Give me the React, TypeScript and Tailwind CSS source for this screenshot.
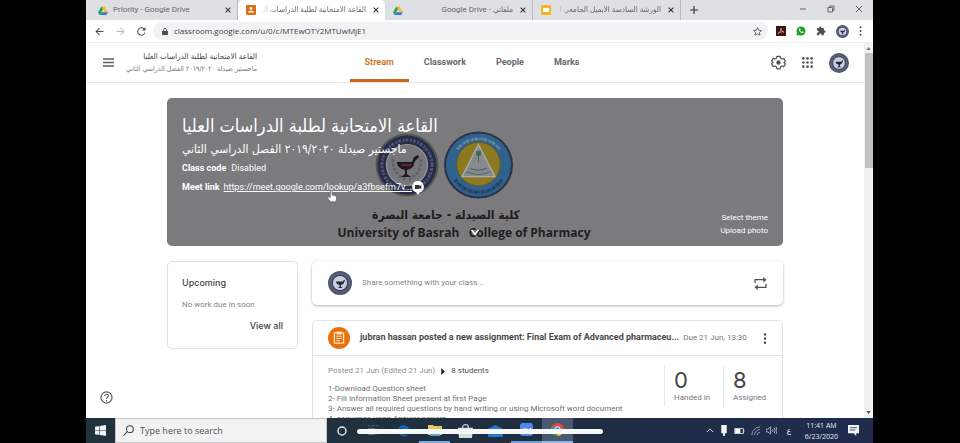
import React from "react";

const latin = "font-[Roboto,'DejaVu_Sans',sans-serif]";
const arabic = "font-['DejaVu_Sans_Condensed','DejaVu_Sans',sans-serif]";

function PharmacySeal({ className }: { className: string }) {
  return (
    <svg viewBox="0 0 64 64" className={className} aria-hidden="true">
      <circle cx="32" cy="32" r="31.5" fill="#565550" />
      <circle cx="32" cy="32" r="29.5" fill="#272c4a" />
      <circle cx="32" cy="32" r="25" fill="none" stroke="#4d536e" strokeWidth="3" strokeDasharray="2 1 3 1.5" />
      <circle cx="32" cy="32" r="20.5" fill="#77777b" stroke="#96979c" strokeWidth="1.2" />
      <path d="M18 26c-1 9 4 17 12 20M46 26c1 9-4 17-12 20" fill="none" stroke="#5e6067" strokeWidth="2.5" strokeDasharray="3 1.5" />
      <path d="M22 29h15l2-5 4-2 1 2-3 3-2 3c0 4-3 6-7 7v4l4 3H26l4-3v-4c-5-1-8-4-8-8z" fill="#20191d" />
      <path d="M26 32h10" stroke="#58282d" strokeWidth="2" />
    </svg>
  );
}

function Avatar({ className }: { className: string }) {
  return (
    <svg viewBox="0 0 24 24" className={className} aria-hidden="true">
      <circle cx="12" cy="12" r="12" fill="#4d556c" />
      <circle cx="12" cy="12" r="9.5" fill="none" stroke="#6b738d" strokeWidth="1.3" strokeDasharray="1 1" />
      <circle cx="12" cy="12" r="7.6" fill="#c9d0dc" stroke="#343d5a" />
      <path d="M8 10.5h7l1-2 1 1-1 2c-.5 1.500-1.500 2-3 2.500v2l2 1H9.500l2-1v-2c-2-.5-3.500-1.500-3.500-3.500z" fill="#23283c" />
    </svg>
  );
}

function UniversitySeal({ className }: { className: string }) {
  return (
    <svg viewBox="0 0 72 70" className={className} aria-hidden="true">
      <ellipse cx="36" cy="35" rx="35.5" ry="34.5" fill="#2b3349" />
      <ellipse cx="36" cy="35" rx="33.5" ry="32.5" fill="#2f628c" />
      <path d="M14 19a27 26 0 0 1 44 0" fill="none" stroke="#66869e" strokeWidth="3" strokeDasharray="2 .7 4 1 1 .5" />
      <path d="M12 50a28 27 0 0 0 48 0" fill="none" stroke="#253f62" strokeWidth="3.5" strokeDasharray="3 1 1.5 .7" />
      <circle cx="36" cy="34" r="22.5" fill="#8d7a20" stroke="#5a5931" />
      <path d="M36 14 19 47h34z" fill="#858a8d" stroke="#a9adae" strokeWidth="1.3" />
      <path d="M36 23v9M34 21h4v4h-4z" stroke="#46665f" fill="#46665f" />
      <path d="M24 42c8 4 16 4 24 0M27 38c6 3 12 3 18 0" fill="none" stroke="#53676f" strokeWidth="1.2" />
    </svg>
  );
}

function DriveIcon() {
  return (
    <svg viewBox="0 0 24 22" className="h-[9px] w-[10px] shrink-0" aria-hidden="true">
      <path d="M8 1h8l8 14h-8z" fill="#f6c026" />
      <path d="M8 1 0 15l4 7 8-14z" fill="#1ea362" />
      <path d="M8 15h16l-4 7H4z" fill="#3a78d8" />
    </svg>
  );
}

function ClassroomIcon() {
  return (
    <svg viewBox="0 0 20 20" className="size-[10px] shrink-0" aria-hidden="true">
      <rect width="20" height="20" rx="2" fill="#dd6d13" />
      <circle cx="10" cy="7" r="2.8" fill="#fff" />
      <path d="M4 15c0-5 12-5 12 0z" fill="#fff" />
    </svg>
  );
}

function SlidesIcon() {
  return (
    <svg viewBox="0 0 20 20" className="size-[10px] shrink-0" aria-hidden="true">
      <rect width="20" height="20" rx="3" fill="#f2b51c" />
      <rect x="4" y="6" width="12" height="8" fill="#fff" />
    </svg>
  );
}

function Cross({ className }: { className: string }) {
  return (
    <svg viewBox="0 0 10 10" className={className} aria-hidden="true">
      <path d="m1 1 8 8M9 1 1 9" stroke="currentColor" strokeWidth="1.8" />
    </svg>
  );
}

type TabProps = { icon: React.ReactNode; title: string; rtl?: boolean; active?: boolean; fade?: boolean };

function BrowserTab({ icon, title, rtl, active, fade }: TabProps) {
  return (
    <div
      className={`flex min-w-0 flex-1 items-center gap-[5px] pr-[4px] pl-[8px] ${
        active ? "rounded-t-[5px] bg-white" : "border-r border-[#b9babe]"
      }`}
    >
      {icon}
      <span
        dir={rtl ? "rtl" : "ltr"}
        className={`min-w-0 flex-1 overflow-hidden text-[8px] leading-[12px] whitespace-nowrap text-[#65666a] ${
          fade ? "[mask-image:linear-gradient(to_right,transparent,black_16px)]" : ""
        } font-[Roboto,'DejaVu_Sans_Condensed','DejaVu_Sans',sans-serif]`}
      >
        {title}
      </span>
      <button aria-label="Close tab" className="flex size-[10px] items-center justify-center text-[#333]">
        <Cross className="size-[6px]" />
      </button>
    </div>
  );
}

function BrowserChrome() {
  return (
    <header className="shrink-0">
      <div className="flex h-[20px] bg-[#dfe0e4]">
        <div className="flex min-w-0 grow-0 basis-[595px] pl-[4px]">
          <BrowserTab icon={<DriveIcon />} title="Priority - Google Drive" />
          <BrowserTab icon={<ClassroomIcon />} title="القاعة الامتحانية لطلبة الدراسات الـ" rtl active fade />
          <BrowserTab icon={<DriveIcon />} title="ملفاتي - Google Drive" rtl />
          <BrowserTab icon={<SlidesIcon />} title="الورشة السادسة الايميل الجامعي ا-" rtl fade />
        </div>
        <button aria-label="New tab" className="flex w-[25px] items-center justify-center text-[#333]">
          <svg viewBox="0 0 10 10" className="size-[8px]"><path d="M5 0v10M0 5h10" stroke="currentColor" strokeWidth="1.5" /></svg>
        </button>
        <div className="ml-auto flex items-center gap-[20px] pr-[10px] pb-[3px] text-[#66676b]">
          <button aria-label="Minimise"><svg viewBox="0 0 8 8" className="size-[8px]"><path d="M1 4h6" stroke="currentColor" /></svg></button>
          <button aria-label="Restore"><svg viewBox="0 0 8 8" className="size-[8px]"><path d="M1 2.500h4.500V7H1zM2.500 2V1H7v4.500H6" fill="none" stroke="currentColor" /></svg></button>
          <button aria-label="Close window"><svg viewBox="0 0 8 8" className="size-[8px]"><path d="m1 1 6 6M7 1 1 7" stroke="currentColor" /></svg></button>
        </div>
      </div>
      <div className="flex h-[23px] items-center border-b border-[#eeeeef] bg-white pr-[11px] pl-[9px] text-[#4c4d50]">
        <div className="flex gap-[12px]">
          <button aria-label="Back"><svg viewBox="0 0 16 16" className="size-[9px]"><path d="M15 8H2M8 2 2 8l6 6" fill="none" stroke="currentColor" strokeWidth="1.8" /></svg></button>
          <button aria-label="Forward" className="text-[#b9babd]"><svg viewBox="0 0 16 16" className="size-[9px]"><path d="M1 8h13M8 2l6 6-6 6" fill="none" stroke="currentColor" strokeWidth="1.8" /></svg></button>
          <button aria-label="Reload"><svg viewBox="0 0 16 16" className="size-[9px]"><path d="M14 10a6.500 6.500 0 1 1-1.500-6.500L14 5" fill="none" stroke="currentColor" strokeWidth="1.8" /><path d="M15 0v6H9z" fill="currentColor" /></svg></button>
        </div>
        <div className="ml-[7px] flex h-[18px] min-w-0 flex-1 items-center gap-[6px] rounded-full bg-[#f1f2f4] pr-[6px] pl-[9px]">
          <svg viewBox="0 0 10 12" className="h-[7px] w-[6px] shrink-0"><path d="M0 5h10v7H0z" fill="currentColor" /><path d="M2.500 5V3a2.500 2.500 0 0 1 5 0v2" fill="none" stroke="currentColor" strokeWidth="1.5" /></svg>
          <input
            aria-label="Address"
            readOnly
            value="classroom.google.com/u/0/c/MTEwOTY2MTUwMjE1"
            className="min-w-0 flex-1 bg-transparent font-['Open_Sans',sans-serif] text-[8px] leading-[14px] text-[#3f4043] outline-none"
          />
          <button aria-label="Bookmark this page">
            <svg viewBox="0 0 20 20" className="size-[9px]"><path d="m10 1.500 2.600 5.700 6.200.7-4.600 4.200 1.300 6.100L10 15.100l-5.500 3.100 1.300-6.100L1.200 7.900l6.200-.7z" fill="none" stroke="currentColor" strokeWidth="1.8" /></svg>
          </button>
        </div>
        <div className="ml-[8px] flex items-center gap-[10px]">
          <button aria-label="PDF extension">
            <svg viewBox="0 0 20 20" className="size-[10px]"><path d="M0 0h20v20H0z" fill="#401313" /><path d="M4 15c4-2 6-6 6-11 0 5 3 8 6 8-4-1-9 0-12 3z" fill="none" stroke="#d9b3b0" strokeWidth="1.5" /></svg>
          </button>
          <button aria-label="Phone extension">
            <svg viewBox="0 0 20 20" className="size-[10px]"><circle cx="10" cy="10" r="9" fill="#1ba31c" /><path d="m1 19 1-6 5 5z" fill="#1ba31c" /><path d="M6 5c-1 5 4 10 9 9l-.5-3-2-.5-1.500 1.500-3-3L9.500 7 8.500 5z" fill="#fff" /></svg>
          </button>
          <button aria-label="Extensions">
            <svg viewBox="0 0 24 24" className="size-[10px]"><path d="M20.500 11H19V7a2 2 0 0 0-2-2h-4V3.500a2.500 2.500 0 0 0-5 0V5H4a2 2 0 0 0-2 2v3.800h1.500a2.700 2.700 0 0 1 0 5.400H2V20a2 2 0 0 0 2 2h3.800v-1.500a2.700 2.700 0 0 1 5.400 0V22H17a2 2 0 0 0 2-2v-4h1.500a2.500 2.500 0 0 0 0-5z" fill="currentColor" /></svg>
          </button>
          <button aria-label="Profile"><Avatar className="size-[13px]" /></button>
          <button aria-label="Browser menu">
            <svg viewBox="0 0 4 16" className="h-[10px] w-[3px]"><circle cx="2" cy="2" r="1.6" fill="currentColor" /><circle cx="2" cy="8" r="1.6" fill="currentColor" /><circle cx="2" cy="14" r="1.6" fill="currentColor" /></svg>
          </button>
        </div>
      </div>
    </header>
  );
}

function ClassHeader() {
  const tabs = ["Stream", "Classwork", "People", "Marks"];
  return (
    <div className="grid h-[40px] shrink-0 grid-cols-[1fr_auto_1fr] border-b border-[#e6e6e7]">
      <div className="flex items-center gap-[12px] pl-[17px]">
        <button aria-label="Main menu" className="text-[#5c5d60]">
          <svg viewBox="0 0 11 9" className="h-[9px] w-[11px]"><path d="M0 1h11M0 4.500h11M0 8h11" stroke="currentColor" strokeWidth="1.3" /></svg>
        </button>
        <div dir="rtl" className={`whitespace-nowrap ${arabic}`}>
          <div className="text-[8px] leading-[12px] text-[#45464a]">القاعة الامتحانية لطلبة الدراسات العليا</div>
          <div className="text-[7px] leading-[12px] text-[#77787b]">ماجستير صيدلة ٢٠١٩/٢٠٢٠ الفصل الدراسي الثاني</div>
        </div>
      </div>
      <nav className="flex pr-[6px] text-[9px] font-bold text-[#67696d]">
        {tabs.map((tab, i) => (
          <a
            key={tab}
            href="#"
            className={`flex items-center border-b-[3px] px-[15px] pt-[3px] ${
              i === 0 ? "border-[#c8671a] text-[#c8792f]" : "border-transparent"
            }`}
          >
            {tab}
          </a>
        ))}
      </nav>
      <div className="flex items-center justify-end gap-[16px] pr-[15px] text-[#55565a]">
        <button aria-label="Class settings">
          <svg viewBox="0 0 24 24" className="size-[15px]"><path d="M9.500 2h5l.8 3 2.400 1.400 3-.9L23 9.800 20.800 12l2.200 2.200-2.300 4.300-3-.9-2.400 1.400-.8 3h-5l-.8-3-2.400-1.400-3 .9L1 14.200 3.200 12 1 9.800l2.300-4.300 3 .9L8.700 5z" fill="none" stroke="currentColor" strokeWidth="2" strokeLinejoin="round" /><circle cx="12" cy="12" r="3.5" fill="currentColor" /></svg>
        </button>
        <button aria-label="Apps">
          <svg viewBox="0 0 20 20" className="size-[11px]">
            {[2.5, 10, 17.5].map((y) => [2.5, 10, 17.5].map((x) => <circle key={`${x}-${y}`} cx={x} cy={y} r="2.4" fill="currentColor" />))}
          </svg>
        </button>
        <button aria-label="Account"><Avatar className="size-[20px]" /></button>
      </div>
    </div>
  );
}

function Banner() {
  return (
    <section className="relative h-[148px] overflow-hidden rounded-[5px] bg-[#7b7a7d]">
      <div className="absolute inset-x-0 top-[33px] flex flex-col items-center text-[#1d1c20]">
        <div className="flex items-center gap-[4px] pr-[62px]">
          <PharmacySeal className="size-[64px]" />
          <UniversitySeal className="h-[68px] w-[71px]" />
        </div>
        <div dir="rtl" className={`mt-[8px] pr-[58px] text-[12px] leading-[16px] font-bold ${arabic}`}>كلية الصيدلة - جامعة البصرة</div>
        <div className="pr-[22px] font-['Open_Sans',sans-serif] text-[12px] leading-[19px] font-bold whitespace-pre text-[#1f1e21]">University of Basrah   College of Pharmacy</div>
      </div>
      <svg viewBox="0 0 10 8" className="absolute bottom-[10px] left-1/2 h-[7px] w-[9px] -translate-x-1/2"><path d="m1 1 4 5 4-5" fill="none" stroke="#fff" strokeWidth="1.8" /></svg>

      <div className="relative flex flex-col items-start pt-[14px] pl-[15px] text-white">
        <h1 dir="rtl" className={`text-[18px] leading-[27px] ${arabic}`}>القاعة الامتحانية لطلبة الدراسات العليا</h1>
        <p dir="rtl" className={`text-[12px] leading-[20px] ${arabic}`}>ماجستير صيدلة ٢٠١٩/٢٠٢٠ الفصل الدراسي الثاني</p>
        <p className="flex gap-[5px] text-[9px] leading-[19px]">
          <span className="font-bold">Class code</span>
          <span>Disabled</span>
        </p>
        <p className="flex items-center gap-[4px] text-[9px] leading-[19px]">
          <span className="font-bold">Meet link</span>
          <a href="#" className="underline">https://meet.google.com/lookup/a3fbsefm7v...</a>
          <svg viewBox="0 0 12 14" className="-ml-[4px] h-[14px] w-[12px]"><path d="M6 0a6 5.800 0 0 1 2 11.200L6 14l-2-2.800A6 5.800 0 0 1 6 0z" fill="#fff" /><path d="M3 4h4.500v1.200L9.300 4v4L7.500 6.800V8H3z" fill="#333" /></svg>
        </p>
      </div>
      <svg viewBox="0 0 12 16" className="absolute top-[92px] left-[160px] h-[13px] w-[10px]"><path d="M4 1c1-1 2 0 2 1v4l5 1.500c1 1 .5 4-.5 7H4L1 10c-1-2 1-2 3-.5z" fill="#fff" stroke="#555" strokeWidth=".7" /></svg>
      <div className="absolute right-[15px] bottom-[9px] flex flex-col items-end text-[8px] leading-[13px] text-white">
        <button>Select theme</button>
        <button>Upload photo</button>
      </div>
    </section>
  );
}

const card = "rounded-[5px] border border-[#e2e2e3] bg-white";

function Upcoming() {
  return (
    <aside className={`flex h-[88px] w-[131px] shrink-0 flex-col px-[14px] pt-[14px] ${card}`}>
      <h2 className="font-[Inter,sans-serif] text-[9px] leading-[14px] font-medium text-[#3f4043]">Upcoming</h2>
      <p className="mt-[9px] text-[8px] leading-[12px] text-[#85868a]">No work due in soon</p>
      <button className="mt-[8px] self-end font-[Inter,sans-serif] text-[9px] leading-[14px] font-medium text-[#3f4043]">View all</button>
    </aside>
  );
}

function ShareBox() {
  return (
    <section className="flex h-[44px] items-center gap-[10px] rounded-[5px] bg-white px-[16px] shadow-[0_1px_3px_rgba(60,64,67,0.4)]">
      <Avatar className="size-[24px]" />
      <button className="flex-1 text-left text-[8px] text-[#85868a]">Share something with your class...</button>
      <button aria-label="Reuse post" className="text-[#4e4f52]">
        <svg viewBox="0 0 24 24" className="size-[13px]"><path d="M2 11V5h17M22 13v6H5" fill="none" stroke="currentColor" strokeWidth="2.4" /><path d="m17 0 6 5-6 5zM7 14l-6 5 6 5z" fill="currentColor" /></svg>
      </button>
    </section>
  );
}

function Post() {
  const stats = [
    { value: "0", label: "Handed in" },
    { value: "8", label: "Assigned" },
  ];
  return (
    <article className={card}>
      <div className="flex h-[35px] items-center border-b border-[#e4e4e5] pr-[15px] pl-[15px]">
        <svg viewBox="0 0 24 24" className="size-[22px] shrink-0"><circle cx="12" cy="12" r="12" fill="#e8710a" /><path d="M7 6.500h10v11H7z" fill="none" stroke="#fde3cb" strokeWidth="1.4" /><path d="M10 5.500h4v2h-4zM9 10h6M9 12.500h6M9 15h4" fill="#fde3cb" stroke="#fde3cb" strokeWidth="1.1" /></svg>
        <h3 className="ml-[10px] text-[9px] font-bold whitespace-nowrap text-[#48494c]">
          jubran hassan posted a new assignment: Final Exam of Advanced pharmaceu...
        </h3>
        <span className="ml-[4px] text-[8px] whitespace-nowrap text-[#77787b]">Due 21 Jun, 13:30</span>
        <button aria-label="Post options" className="ml-auto text-[#3f4043]">
          <svg viewBox="0 0 4 16" className="h-[11px] w-[4px]"><circle cx="2" cy="2" r="1.7" fill="currentColor" /><circle cx="2" cy="8" r="1.7" fill="currentColor" /><circle cx="2" cy="14" r="1.7" fill="currentColor" /></svg>
        </button>
      </div>
      <div className="flex justify-between pt-[10px] pl-[15px]">
        <div className="text-[8px] leading-[10px] text-[#707174]">
          <p className="flex items-center gap-[6px] whitespace-nowrap">
            <span className="text-[#8e8f92]">Posted 21 Jun (Edited 21 Jun)</span>
            <svg viewBox="0 0 4 8" className="h-[7px] w-[4px]"><path d="m0 0 4 4-4 4z" fill="#222" /></svg>
            <span className="text-[#4e4f52]">8 students</span>
          </p>
          <div className="mt-[8px] whitespace-nowrap">
            <p>1-Download Question sheet</p>
            <p>2- Fill Information Sheet present at first Page</p>
            <p>3- Answer all required questions by hand writing or using Microsoft word document</p>
            <p>4- sequence upon Answer papers</p>
          </div>
        </div>
        <dl className="flex h-[40px] shrink-0">
          {stats.map((s) => (
            <div key={s.label} className="flex w-[59px] flex-col-reverse justify-end border-l border-[#e8e8e9] pt-[2px] pl-[9px]">
              <dt className="text-[8px] leading-[12px] text-[#77787b]">{s.label}</dt>
              <dd className="font-[Inter,sans-serif] text-[22px] leading-[24px] text-[#444548]">{s.value}</dd>
            </div>
          ))}
        </dl>
      </div>
    </article>
  );
}

function TaskbarApps() {
  return (
    <div className="relative flex h-full items-center">
      <button aria-label="Cortana" className="flex w-[30px] justify-center">
        <svg viewBox="0 0 12 12" className="size-[10px]"><circle cx="6" cy="6" r="4.8" fill="none" stroke="#dfe5e8" strokeWidth="1.8" /></svg>
      </button>
      <button aria-label="Task view" className="flex w-[31px] justify-center">
        <svg viewBox="0 0 14 14" className="size-[12px]"><path d="M1 1h2M5 1h4M11 1h2M2 4h7v7H2zM12 4v7" fill="none" stroke="#5c6b75" strokeWidth="1.2" /></svg>
      </button>
      <button aria-label="Edge" className="flex w-[31px] justify-center">
        <svg viewBox="0 0 14 14" className="size-[13px]"><path d="M1 7a6 6 0 0 1 12 0v2H5c1 3 5 3 7 2-2 4-9 3-10-2 1-3 3-4 5-4-3-1-5 0-6 2z" fill="#1565b7" /></svg>
      </button>
      <button aria-label="File Explorer" className="flex h-full w-[31px] items-center justify-center border-b-2 border-[#7aafe0]">
        <svg viewBox="0 0 14 12" className="h-[12px] w-[14px]"><path d="M0 1h5l1 1h8v9H0z" fill="#eac85e" /><path d="M2 8h10v4H2z" fill="#5aa7dd" /></svg>
      </button>
      <button aria-label="Store" className="flex w-[30px] justify-center">
        <svg viewBox="0 0 16 15" className="h-[14px] w-[15px]"><path d="M5 5V3c0-3 6-3 6 0v2" fill="none" stroke="#ccd3d8" strokeWidth="1.3" /><path d="M0 4h16l-1 11H1z" fill="#d8dde0" /></svg>
      </button>
      <button aria-label="Mail" className="flex w-[31px] justify-center">
        <svg viewBox="0 0 16 13" className="h-[12px] w-[15px]"><path d="M0 4 8 0l8 4v9H0z" fill="#2177ce" /><path d="m1 5 7 5 7-5" fill="#8abef0" /></svg>
      </button>
      <button aria-label="Zoom" className="flex h-full w-[31px] items-center justify-center border-b-2 border-[#6d9fe0]">
        <svg viewBox="0 0 14 14" className="size-[13px]"><rect width="14" height="14" rx="3" fill="#4d86ec" /><path d="M3 6h5v3H3zM9 7l3-2v5L9 8z" fill="#fff" /></svg>
      </button>
      <button aria-label="Chrome" className="flex h-full w-[31px] items-center justify-center border-b-2 border-[#8fb9e8] bg-[#4b5970]">
        <svg viewBox="0 0 14 14" className="size-[13px]"><circle cx="7" cy="7" r="7" fill="#dd4b3e" /><path d="M7 7 1 3.500A7 7 0 0 0 7 14z" fill="#35a359" /><path d="M7 7h7a7 7 0 0 1-7 7z" fill="#f5c63b" /><circle cx="7" cy="7" r="3" fill="#4688f0" stroke="#fff" /></svg>
      </button>
      <div className="absolute inset-x-0 top-[11px] mr-[-30px] ml-[30px] h-[5px] rounded-full bg-[#f7f8f9]" />
    </div>
  );
}

function Taskbar() {
  return (
    <footer className="flex h-[25px] shrink-0 bg-linear-to-r from-[#20333d] via-[#1f2f40] to-[#202b4e] text-white">
      <button aria-label="Start" className="flex w-[29px] items-center justify-center">
        <svg viewBox="0 0 20 20" className="size-[11px]"><path d="M0 3l8-1v7H0zM9 2l11-2v9H9zM0 10h8v8l-8-1zM9 10h11v10L9 18z" fill="#eef3f5" /></svg>
      </button>
      <label className="flex w-[212px] items-center gap-[6px] border border-[#c4c5c7] bg-[#f2f2f3] px-[7px] text-[#414245]">
        <svg viewBox="0 0 12 12" className="size-[11px] shrink-0"><circle cx="7.5" cy="4.5" r="3.7" fill="none" stroke="currentColor" strokeWidth="1.1" /><path d="M5 7 .5 11.500" stroke="currentColor" strokeWidth="1.1" /></svg>
        <input aria-label="Search" placeholder="Type here to search" className="min-w-0 flex-1 bg-transparent font-['Open_Sans',sans-serif] text-[9px] outline-none placeholder:text-[#505154]" />
      </label>
      <TaskbarApps />
      <div className="ml-auto flex items-center pr-[14px]">
        <div className="flex items-center gap-[6px]">
          <svg viewBox="0 0 10 6" className="h-[5px] w-[8px]"><path d="m1 5 4-4 4 4" fill="none" stroke="#dde1e8" strokeWidth="1.2" /></svg>
          <svg viewBox="0 0 8 12" className="h-[11px] w-[8px]"><path d="M1 0h6v9H1zM3 9h2v3H3z" fill="#f1f3f6" /></svg>
          <svg viewBox="0 0 12 7" className="h-[6px] w-[11px]"><path d="M.5.500h10v6H.5zM11 2v3" fill="none" stroke="#eceff3" /><path d="M1 1h6v5H1z" fill="#fff" /></svg>
          <svg viewBox="0 0 10 10" className="size-[9px]"><path d="M1 10A9 9 0 0 1 10 1M4 10a6 6 0 0 1 6-6M7 10a3 3 0 0 1 3-3" fill="none" stroke="#9ba3b3" /></svg>
          <svg viewBox="0 0 12 10" className="h-[9px] w-[11px]"><path d="M0 3.500h2L5 1v8L2 6.500H0zM7 3.500q1 1.500 0 3M9 2q2 3 0 6M11 1q2 4 0 8" fill="none" stroke="#b3bac8" /></svg>
          <span className={`w-[12px] text-center text-[8px] ${arabic}`}>ع</span>
        </div>
        <div className="ml-[10px] text-center font-['Open_Sans',sans-serif] text-[7px] leading-[11px] text-[#e8ebf0]">
          <div>11:41 AM</div>
          <div>6/23/2020</div>
        </div>
        <button aria-label="Notifications" className="ml-[10px]">
          <svg viewBox="0 0 12 12" className="size-[11px]"><path d="M0 0h12v9H9v3L6 9H0z" fill="#f2f4f7" /><path d="M2 3h8M2 5.500h6" stroke="#3b4765" /></svg>
        </button>
      </div>
    </footer>
  );
}

export default function App() {
  return (
    <div className={`h-screen bg-black pr-[87px] pl-[86px] ${latin}`}>
      <div className="flex h-full flex-col overflow-hidden bg-white">
        <BrowserChrome />
        <div className="flex min-h-0 flex-1">
          <div className="relative flex min-w-0 flex-1 flex-col overflow-hidden">
            <ClassHeader />
            <main className="mx-auto w-full max-w-[616px] pt-[15px]">
              <Banner />
              <div className="mt-[15px] flex items-start gap-[14px]">
                <Upcoming />
                <div className="flex min-w-0 flex-1 flex-col gap-[15px]">
                  <ShareBox />
                  <Post />
                </div>
              </div>
            </main>
            <button aria-label="Help" className="absolute bottom-[14px] left-[14px] text-[#55565a]">
              <svg viewBox="0 0 14 14" className="size-[13px]"><circle cx="7" cy="7" r="6" fill="none" stroke="currentColor" strokeWidth="1.2" /><path d="M5 5.500c0-2.800 4-2.600 4-.3C9 6.800 7 6.800 7 8.500M7 9.800V11" fill="none" stroke="currentColor" strokeWidth="1.2" /></svg>
            </button>
          </div>
          <div className="flex w-[9px] flex-col items-center justify-between bg-[#f1f1f2] py-[4px]">
            <svg viewBox="0 0 6 4" className="h-[3px] w-[5px]"><path d="m0 4 3-4 3 4z" fill="#77787b" /></svg>
            <div className="mt-[3px] mb-auto h-[115px] w-[8px] bg-[#c2c2c4]" />
            <svg viewBox="0 0 6 4" className="h-[3px] w-[5px]"><path d="m0 0 3 4 3-4z" fill="#55565a" /></svg>
          </div>
        </div>
        <Taskbar />
      </div>
    </div>
  );
}
